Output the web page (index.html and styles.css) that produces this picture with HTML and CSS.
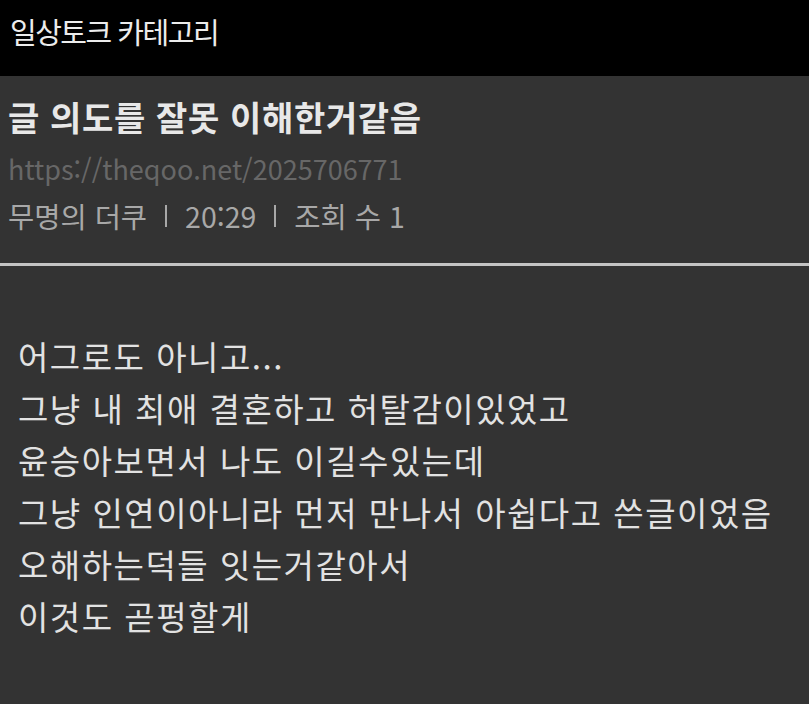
FILE: index.html
```html
<!DOCTYPE html>
<html lang="ko">
<head>
<meta charset="utf-8">
<link rel="stylesheet" href="styles.css">
</head>
<body>
<header class="topbar">일상토크 카테고리</header>
<section class="post-head">
  <h1 class="title">글 의도를 잘못 이해한거같음</h1>
  <div class="url">https://theqoo.net/2025706771</div>
  <div class="meta"><span>무명의 더쿠</span><span class="sep"></span><span>20:29</span><span class="sep"></span><span>조회 수 1</span></div>
</section>
<hr class="divider">
<article class="content">
  <p>어그로도 아니고...</p>
  <p>그냥 내 최애 결혼하고 허탈감이있었고</p>
  <p>윤승아보면서 나도 이길수있는데</p>
  <p>그냥 인연이아니라 먼저 만나서 아쉽다고 쓴글이었음</p>
  <p>오해하는덕들 잇는거같아서</p>
  <p>이것도 곧펑할게</p>
</article>
</body>
</html>
```
FILE: styles.css
```css
html, body {
  margin: 0;
  padding: 0;
  background: #333333;
  font-family: "Noto Sans CJK KR", "Noto Sans", sans-serif;
  height: 100%;
  overflow: hidden;
}
.topbar {
  background: #000;
  color: #ececec;
  height: 76px;
  box-sizing: border-box;
  padding: 0 0 14px 10px;
  font-size: 29px;
  line-height: 62px;
  letter-spacing: -1.5px;
}
.post-head {
  padding: 19px 8px 0 8px;
}
.title {
  margin: 0;
  font-size: 34px;
  font-weight: 700;
  color: #e8e8e8;
  line-height: 44px;
  letter-spacing: 0.65px;
}
.url {
  margin-top: 10px;
  font-size: 27px;
  line-height: 40px;
  color: #676767;
}
.meta {
  margin-top: 7px;
  font-size: 28.5px;
  line-height: 40px;
  color: #a8a8a8;
  display: flex;
  align-items: center;
  gap: 18px;
}
.sep {
  width: 2px;
  height: 22px;
  background: #a8a8a8;
}
.divider {
  margin: 27px 0 0 0;
  border: 0;
  height: 3px;
  background: #c4c4c4;
}
.content {
  padding: 64px 18px 0 18px;
  color: #e2e2e2;
  font-size: 33px;
  line-height: 52px;
  letter-spacing: 1.5px;
}
.content p {
  margin: 0;
}
```
